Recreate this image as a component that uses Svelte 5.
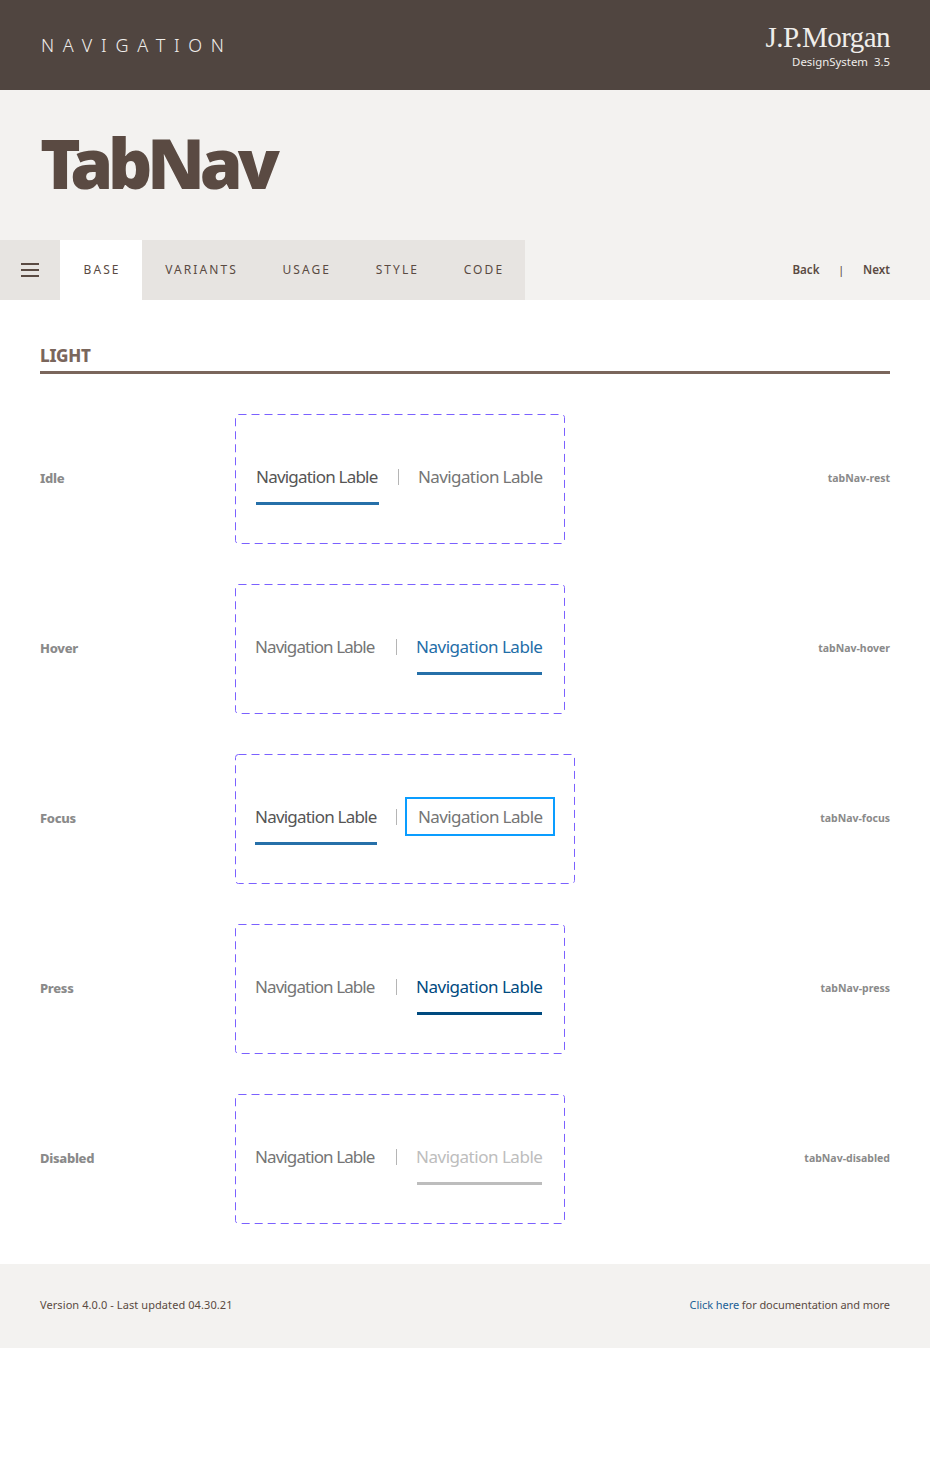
<script>
  const tabs = ['VARIANTS', 'USAGE', 'STYLE', 'CODE'];

  const rows = [
    { name: 'Idle', token: 'tabNav-rest', kind: 'idle' },
    { name: 'Hover', token: 'tabNav-hover', kind: 'hover' },
    { name: 'Focus', token: 'tabNav-focus', kind: 'focus' },
    { name: 'Press', token: 'tabNav-press', kind: 'press' },
    { name: 'Disabled', token: 'tabNav-disabled', kind: 'disabled' }
  ];
</script>

<div class="page">
  <header class="top">
    <div class="eyebrow">NAVIGATION</div>
    <div class="brand">
      <div class="logo">J.P.Morgan</div>
      <div class="system">DesignSystem&nbsp; 3.5</div>
    </div>
  </header>

  <section class="hero">
    <h1>TabNav</h1>
    <div class="toolbar">
      <nav class="tabs">
        <button class="burger" aria-label="Menu">
          <svg width="18" height="14" viewBox="0 0 18 14">
            <path d="M0 1h18M0 7h18M0 13h18" stroke="#5a4a42" stroke-width="2" fill="none" />
          </svg>
        </button>
        <a class="tab-link current" href="#base">BASE</a>
        {#each tabs as tab}
          <a class="tab-link" href="#{tab}">{tab}</a>
        {/each}
      </nav>
      <div class="pager">
        <span>Back</span>
        <i>|</i>
        <span>Next</span>
      </div>
    </div>
  </section>

  <main class="content">
    <h2>LIGHT</h2>
    {#each rows as row}
      <div class="row">
        <div class="state">{row.name}</div>
        <div class="box {row.kind}">
          <svg class="dash" aria-hidden="true"><rect x="0.5" y="0.5" rx="3" /></svg>
          <div class="item first"><span>Navigation Lable</span></div>
          <div class="divider"></div>
          <div class="item second"><span>Navigation Lable</span></div>
        </div>
        <div class="token">{row.token}</div>
      </div>
    {/each}
  </main>

  <footer class="foot">
    <span class="version">Version 4.0.0 - Last updated 04.30.21</span>
    <span class="docs"><a href="#docs">Click here</a> for documentation and more</span>
  </footer>
</div>

<style>
  :global(body) {
    background: #fff;
  }

  .page {
    font-family: "Noto Sans", sans-serif;
    color: #5a4a42;
  }

  .top {
    height: 90px;
    background: #504540;
    display: flex;
    justify-content: space-between;
    align-items: flex-start;
    padding: 0 40px;
  }

  .eyebrow {
    margin: 33px 0 0 1px;
    font-size: 18px;
    line-height: 24px;
    letter-spacing: 8.75px;
    font-weight: 300;
    color: #f0eeec;
  }

  .brand {
    margin-top: 21px;
    text-align: right;
    color: #efedea;
  }

  .logo {
    font-family: "Liberation Serif", serif;
    font-size: 29px;
    line-height: 33px;
    letter-spacing: -0.55px;
  }

  .system {
    font-size: 11.4px;
    line-height: 16px;
  }

  .hero {
    background: #f3f2f0;
    height: 210px;
    display: flex;
    flex-direction: column;
  }

  h1 {
    margin: 0;
    height: 150px;
    padding: 0 0 0 40px;
    font-size: 69px;
    line-height: 144px;
    font-weight: 900;
    letter-spacing: -5.1px;
    color: #5a4a42;
  }

  .toolbar {
    height: 60px;
    display: flex;
    justify-content: space-between;
    align-items: center;
    padding-right: 40px;
  }

  .tabs {
    display: flex;
    height: 60px;
    background: #e7e4e1;
  }

  .burger {
    width: 60px;
    border: 0;
    padding: 0;
    background: none;
    display: flex;
    align-items: center;
    justify-content: center;
  }

  .tab-link {
    padding: 0 21px 0 23.5px;
    line-height: 59px;
    font-size: 12px;
    letter-spacing: 2.1px;
    color: #5a4a42;
    text-decoration: none;
  }

  .tab-link.current {
    background: #fff;
  }

  .pager {
    display: flex;
    gap: 18.6px;
    font-size: 11.6px;
    font-weight: 600;
    margin-bottom: 2px;
  }

  .pager i {
    font-style: normal;
    font-weight: 400;
  }

  .content {
    padding: 44px 40px 40px;
  }

  h2 {
    margin: 0 0 40px;
    height: 27px;
    font-size: 17px;
    line-height: 24px;
    font-weight: 800;
    letter-spacing: -0.3px;
    color: #7a665c;
    border-bottom: 3px solid #7a665c;
  }

  .row {
    display: flex;
    align-items: center;
    height: 130px;
    margin-bottom: 40px;
  }

  .row:last-child {
    margin-bottom: 0;
  }

  .state {
    width: 195px;
    margin-bottom: 2px;
    font-size: 13px;
    font-weight: 800;
    letter-spacing: -0.3px;
    color: #8a8a8a;
  }

  .token {
    margin-left: auto;
    margin-bottom: 2px;
    font-size: 10.5px;
    font-weight: 700;
    color: #8a8a8a;
  }

  .box {
    position: relative;
    box-sizing: border-box;
    width: 330px;
    height: 130px;
    padding: 43px 0 0 20px;
    display: flex;
    align-items: flex-start;
  }

  .box.idle {
    padding-left: 21px;
  }

  .box.focus {
    width: 340px;
  }

  .dash {
    position: absolute;
    inset: 0;
    width: 100%;
    height: 100%;
    pointer-events: none;
  }

  .dash rect {
    width: calc(100% - 1px);
    height: calc(100% - 1px);
    fill: none;
    stroke: #7b61ff;
    stroke-dasharray: 8 5;
  }

  .item {
    padding-bottom: 6px;
    border-bottom: 3px solid transparent;
    color: #757575;
  }

  .first {
    width: 120px;
  }

  .second {
    width: 125px;
  }

  .item span {
    display: block;
    box-sizing: border-box;
    height: 39px;
    padding-top: 1px;
    line-height: 38px;
    font-size: 17px;
    letter-spacing: -0.91px;
    white-space: nowrap;
  }

  .second span {
    letter-spacing: -0.6px;
    margin: 0 -1px;
    padding-left: 1px;
  }

  .divider {
    width: 1px;
    height: 16px;
    margin: 12px 20px 0 21px;
    background: #b5b5b5;
  }

  .idle .first,
  .focus .first {
    color: #555;
    border-bottom-color: #2670a9;
  }

  .idle .first {
    width: 123px;
  }

  .focus .first {
    width: 122px;
  }

  .idle .first span,
  .focus .first span {
    letter-spacing: -0.79px;
  }

  .idle .divider {
    margin: 12px 19px 0;
  }

  .idle .second span {
    margin: 0;
    padding-left: 0;
  }

  .hover .second span,
  .press .second span,
  .disabled .second span {
    letter-spacing: -0.48px;
    padding-left: 0;
  }

  .hover .second {
    color: #1f6ea8;
    border-bottom-color: #2670a9;
  }

  .press .second {
    color: #004a7f;
    border-bottom-color: #004a7f;
  }

  .disabled .second {
    color: #bdbdbd;
    border-bottom-color: #bdbdbd;
  }

  .focus .divider {
    margin: 12px 8px 0 19px;
  }

  .focus .second {
    width: 150px;
  }

  .focus .second span {
    margin: 0;
    border: 2px solid #0a9dff;
    line-height: 34px;
    padding: 1px 11px 0;
  }

  .foot {
    height: 84px;
    box-sizing: border-box;
    padding: 0 40px 4px;
    background: #f3f2f0;
    display: flex;
    justify-content: space-between;
    align-items: center;
    font-size: 11px;
    color: #5a4a42;
  }

  .version {
    letter-spacing: 0.08px;
  }

  .docs {
    letter-spacing: -0.07px;
  }

  .foot a {
    color: #1b5f96;
    text-decoration: none;
  }
</style>
